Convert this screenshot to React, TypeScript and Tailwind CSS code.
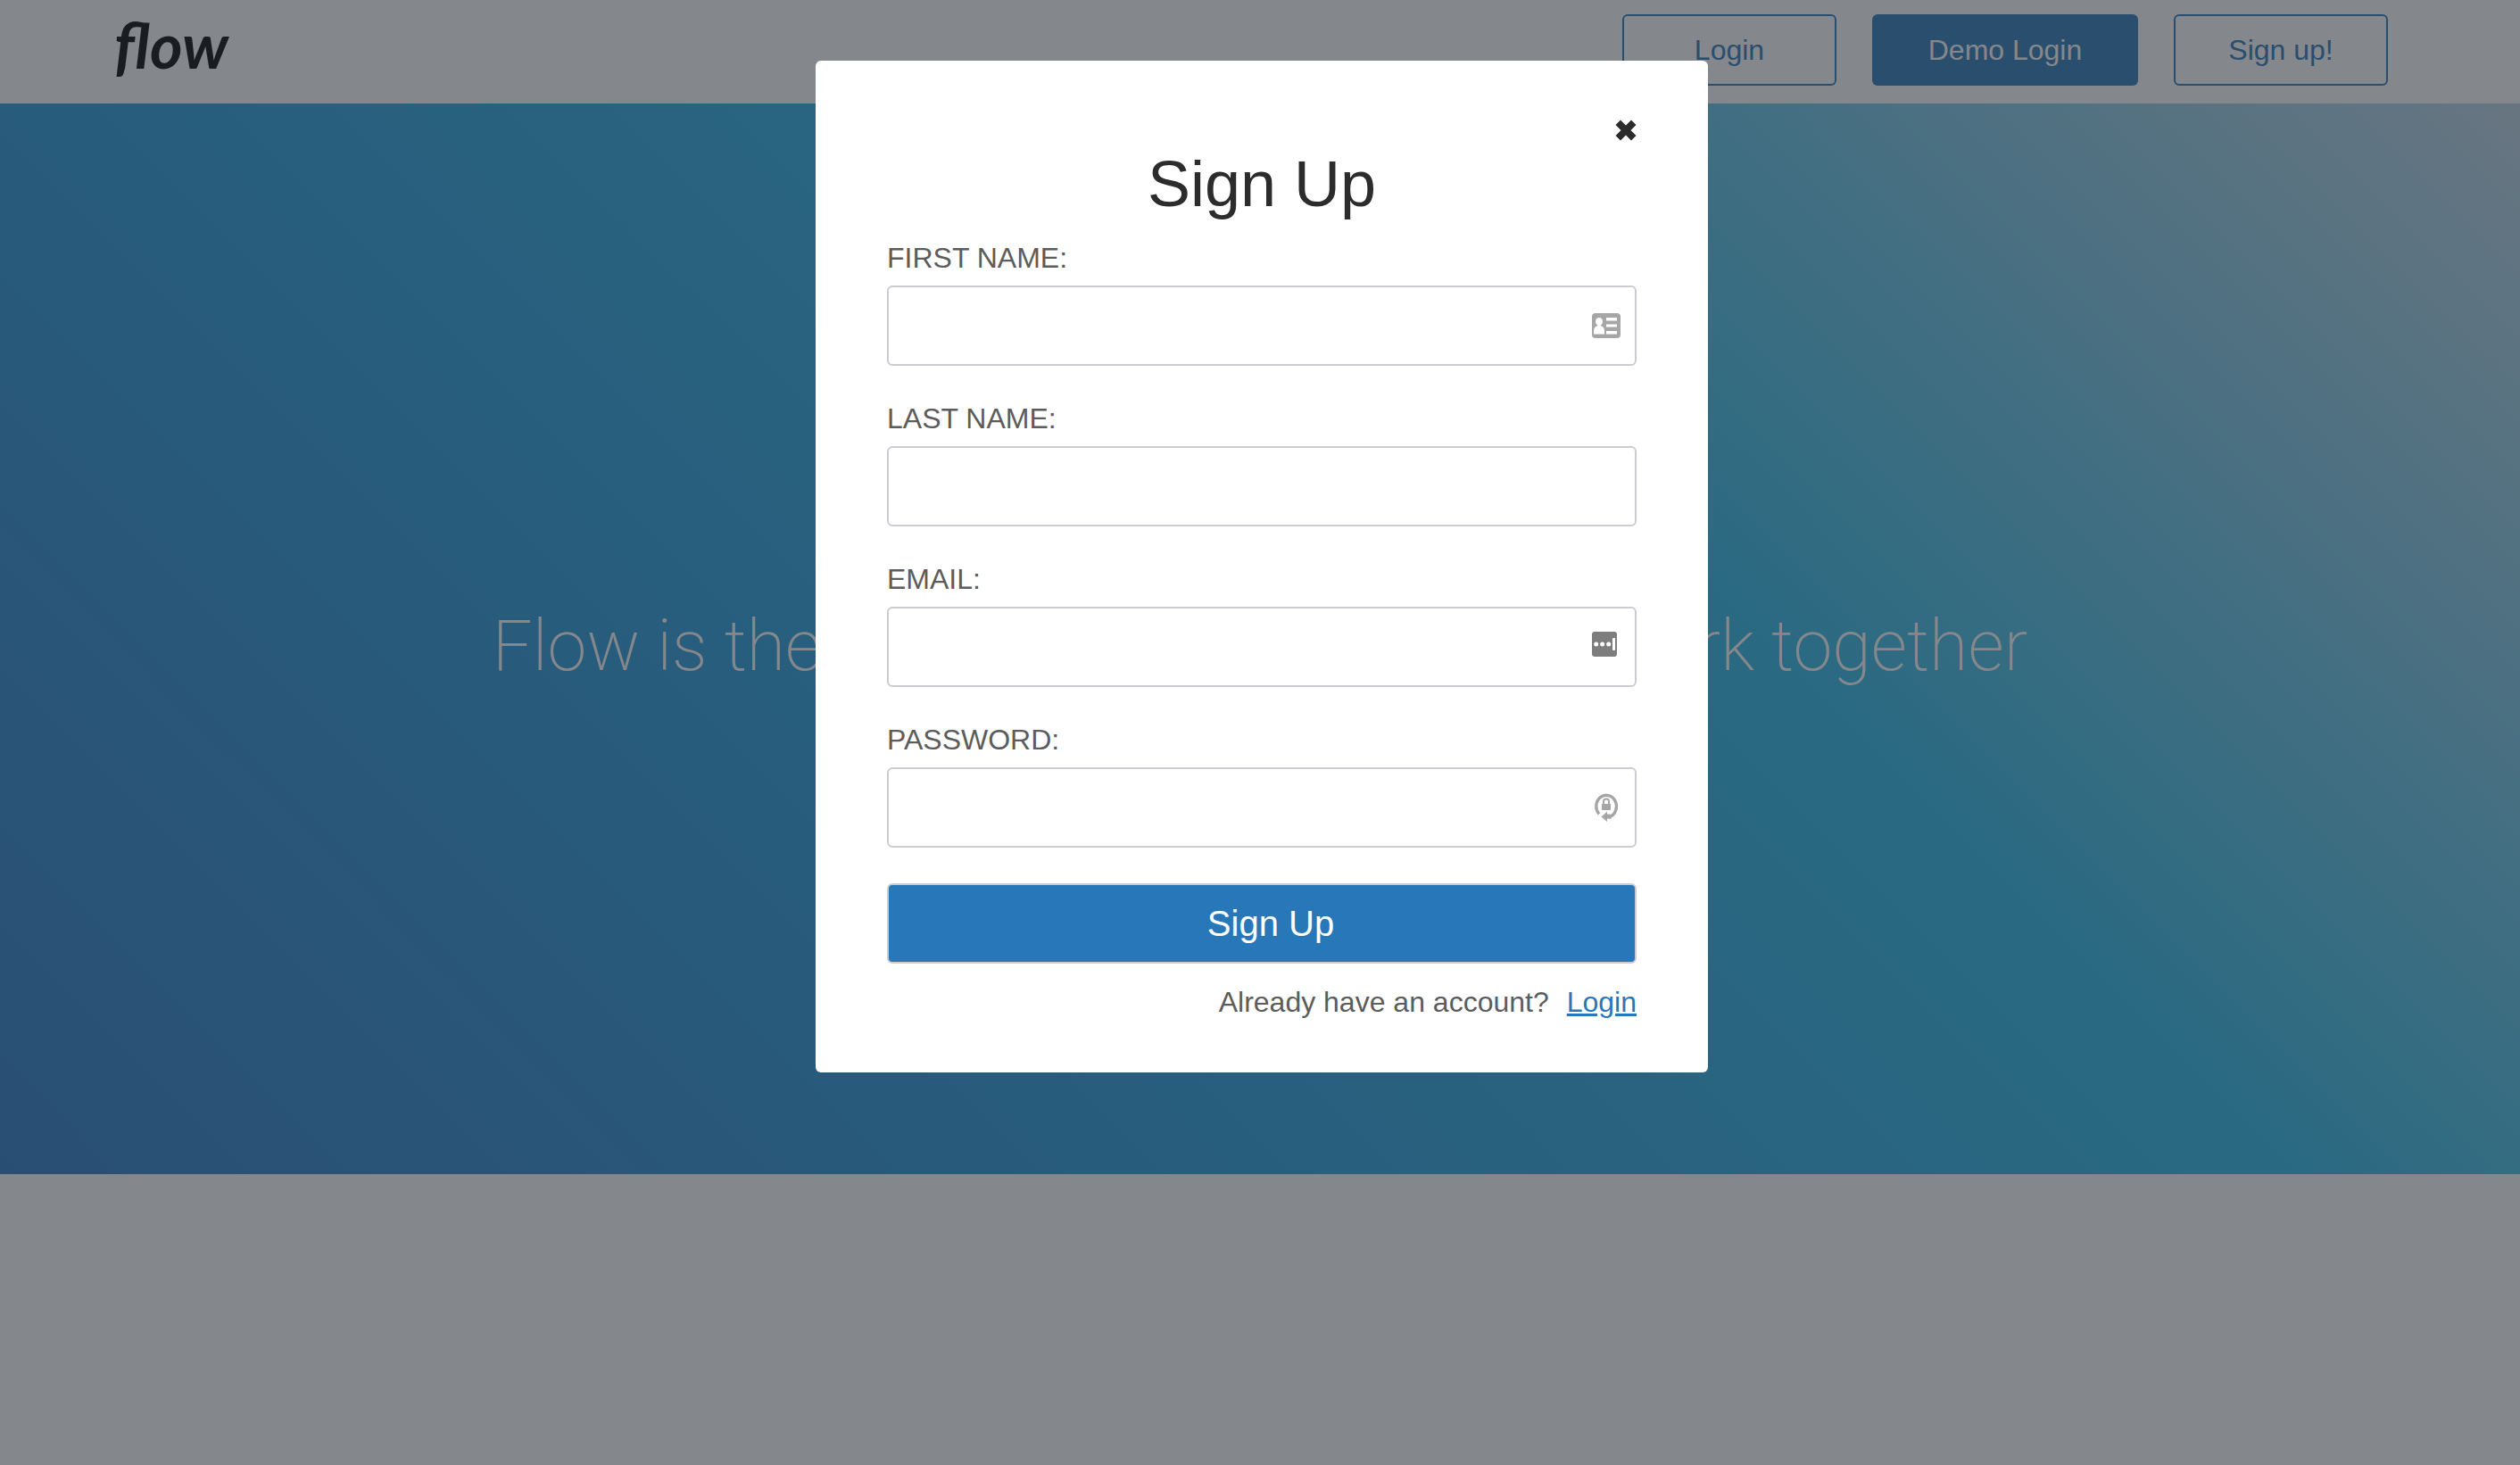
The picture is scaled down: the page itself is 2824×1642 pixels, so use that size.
import React, { useState } from "react";

function CloseIcon() {
  return (
    <svg viewBox="0 0 24 24" className="h-6 w-6 fill-[#2c2c2c]" aria-hidden="true">
      <path d="M6 .5 12 6.500l6-6L23.500 6l-6 6 6 6-5.500 5.500-6-6-6 6L.5 18l6-6-6-6Z" />
    </svg>
  );
}

function ContactIcon() {
  return (
    <svg viewBox="0 0 32 28" className="h-7 w-8" aria-hidden="true">
      <rect width="32" height="28" rx="4" fill="#a6a6a6" />
      <g fill="#fff">
        <ellipse cx="8" cy="9.500" rx="4" ry="4.500" />
        <path d="M2 23.500v-3c0-4 2-6.500 6-6.500s6 2.500 6 6.500v3Z" />
        <rect x="16" y="5" width="12" height="3.500" />
        <rect x="16" y="12.500" width="12" height="3" />
        <rect x="16" y="20" width="12" height="3.500" />
      </g>
    </svg>
  );
}

function DotsIcon() {
  return (
    <svg viewBox="0 0 28 34" className="h-[34px] w-7" aria-hidden="true">
      <rect width="28" height="28" rx="3" fill="#7d7d7d" />
      <g fill="#fff">
        <circle cx="4.700" cy="14" r="2.500" />
        <circle cx="11.700" cy="14" r="2.500" />
        <circle cx="18.700" cy="14" r="2.500" />
        <rect x="23" y="7" width="3" height="14" rx="1" />
      </g>
    </svg>
  );
}

function LockIcon() {
  return (
    <svg viewBox="-3 0 32 34" className="h-[34px] w-8" aria-hidden="true">
      <path d="M5 24.500A11.300 12.500 0 1 1 17 27.500" fill="none" stroke="#a6a6a6" strokeWidth="3.400" />
      <path d="M7.500 27.500 14 21.500v3l4.500.3v5L14 29.500V33Z" fill="#a6a6a6" />
      <path d="M10 14v-3.500a3 3 0 0 1 6 0v3.500" fill="none" stroke="#a6a6a6" strokeWidth="2" />
      <rect x="8" y="13" width="10" height="7" fill="#a6a6a6" />
    </svg>
  );
}

type FieldProps = {
  id: string;
  label: string;
  type?: string;
  icon?: React.ReactNode;
};

function Field({ id, label, type = "text", icon }: FieldProps) {
  return (
    <div className="mb-10 flex flex-col">
      <label htmlFor={id} className="mb-3 text-[32px] leading-[38px] text-[#5c5c5c]">
        {label}
      </label>
      <div className="relative">
        <input
          id={id}
          type={type}
          className="block h-[90px] w-full rounded-md border-2 border-[#cccbd1] bg-white px-5 text-[32px] outline-none"
        />
        {icon && <span className="absolute top-0 right-3.5 flex h-[90px] w-9 items-center">{icon}</span>}
      </div>
    </div>
  );
}

function SignUpModal({ onClose }: { onClose: () => void }) {
  return (
    <div className="fixed inset-0 flex items-start justify-center bg-[rgba(43,48,55,0.58)] pt-[68px] pl-1">
      <form
        role="dialog"
        aria-label="Sign Up"
        onSubmit={(e) => e.preventDefault()}
        className="w-full max-w-[1000px] rounded-md bg-white px-20 pt-16 pb-[60px]"
      >
        <div className="flex justify-end">
          <button type="button" aria-label="Close" onClick={onClose} className="py-0.5">
            <CloseIcon />
          </button>
        </div>
        <h2 className="mt-1 mb-[22px] text-center text-[72px] leading-[84px] text-[#2c2c2c]">Sign Up</h2>
        <Field id="first-name" label="FIRST NAME:" icon={<ContactIcon />} />
        <Field id="last-name" label="LAST NAME:" />
        <Field id="email" label="EMAIL:" type="email" icon={<DotsIcon />} />
        <Field id="password" label="PASSWORD:" type="password" icon={<LockIcon />} />
        <button
          type="submit"
          className="block h-[90px] w-full rounded-md border-2 border-[#cccbd1] bg-[#2777b9] pl-5 text-[40px] text-white"
        >
          Sign Up
        </button>
        <p className="mt-6 flex justify-end gap-5 text-[32px] leading-[38px] text-[#5c5c5c]">
          Already have an account?
          <a href="#login" className="text-[#2777b9] underline">
            Login
          </a>
        </p>
      </form>
    </div>
  );
}

export default function App() {
  const [open, setOpen] = useState(true);
  return (
    <div className="min-h-screen bg-white font-['Liberation_Sans',sans-serif]">
      <header className="flex h-[116px] items-center justify-between pr-[148px] pb-1 pl-32">
        <a href="#home" className="pb-3 font-['Lato',sans-serif] text-[70px] leading-none font-bold text-black italic">
          flow
        </a>
        <nav className="flex gap-10 text-[32px] text-[#2777b9]">
          <button type="button" className="h-20 w-60 rounded-md border-2 border-[#2777b9]">
            Login
          </button>
          <button type="button" className="h-20 w-[298px] rounded-md bg-[#2777b9] text-white">
            Demo Login
          </button>
          <button type="button" className="h-20 w-60 rounded-md border-2 border-[#2777b9]" onClick={() => setOpen(true)}>
            Sign up!
          </button>
        </nav>
      </header>
      <main className="flex h-[1200px] items-center justify-center bg-[linear-gradient(45deg,#2878c8_0%,#249bdd_33%,#28bae9_64%,#bdd5e8_100%)]">
        <h1 className="pt-4 font-['Roboto',sans-serif] text-[79px] font-extralight whitespace-nowrap text-white">
          Flow is the easiest way for teams to work together
        </h1>
      </main>
      {open && <SignUpModal onClose={() => setOpen(false)} />}
    </div>
  );
}
